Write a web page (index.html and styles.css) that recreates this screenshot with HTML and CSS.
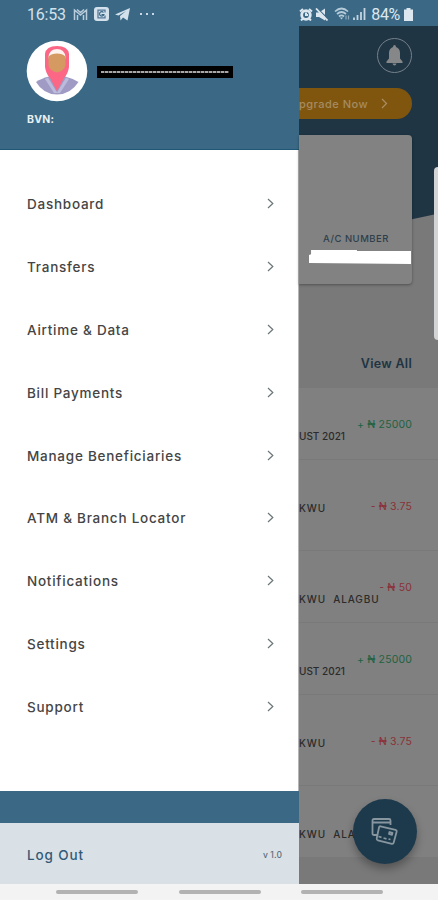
FILE: index.html
```html
<!DOCTYPE html>
<html lang="en">
<head>
    <meta charset="UTF-8">
    <meta name="viewport" content="width=device-width, initial-scale=1.0">
    <title>Mobile Banking</title>
    <link rel="stylesheet" href="styles.css">
</head>
<body>
    <div class="phone">
        <!-- Status Bar -->
        <div class="status-bar">
            <div class="status-left">
                <span class="time">16:53</span>
                <svg class="icon-mail" width="15" height="13" viewBox="0 0 15 13"><path d="M1.500 12V2l6 5 6-5v10M4.500 12V7M10.500 12V7M4 1.500l3.500 3 3.500-3" fill="none" stroke="#b9cddc" stroke-width="1.500"/></svg>
                <svg class="icon-app" width="15" height="14" viewBox="0 0 15 14"><rect width="15" height="14" rx="3" fill="#d3e1ec"/><path d="M11 5.500V3.200H4v7.600h7V8.500" fill="none" stroke="#55799a" stroke-width="1.300"/><path d="M9.500 5.500a2.200 2.200 0 1 0 .3 2.200H7.500" fill="none" stroke="#3b6985" stroke-width="1.200"/></svg>
                <svg class="icon-plane" width="15" height="13" viewBox="0 0 15 13"><path d="M0 6.500L15 0l-2.500 12.500-4.500-3-2.500 3-.5-4.500 6-5-7.500 4.500z" fill="#d3e1ec"/></svg>
                <span class="dots"><i></i><i></i><i></i></span>
            </div>
            <div class="status-right">
                <svg width="14" height="13" viewBox="0 0 14 13"><circle cx="7" cy="7" r="4.300" fill="none" stroke="#dce7ef" stroke-width="2.800"/><path d="M1 3.500l3-2.500M13 3.500L10 1M2 12.500l2-2M12 12.500l-2-2M7 4.500V7h2" stroke="#dce7ef" stroke-width="2" fill="none"/></svg>
                <svg class="icon-mute" width="13" height="13" viewBox="0 0 13 13"><path d="M1 4.500h3L10 .5v12L4 9H1z" fill="#dce7ef"/><path d="M2 0l11 11" stroke="#3b6985" stroke-width="1.300"/><path d="M1 .5l11.500 12" stroke="#dce7ef" stroke-width="1.800"/></svg>
                <svg class="icon-wifi" width="16" height="14" viewBox="0 0 16 14"><path d="M1 4.500q6.500-6 13 0M3 7q4.500-4 9 0M5 9.500q2.500-2.300 5 0" fill="none" stroke="#b4cbd9" stroke-width="1.700"/><path d="M7.500 12.500L5.800 10.500h3.400z" fill="#b4cbd9"/><path d="M12 8.500v4M14.500 8.500v4" stroke="#8aabc0" stroke-width="1.200"/></svg>
                <svg class="icon-signal" width="13" height="12" viewBox="0 0 13 12"><path d="M1 12V9.500M4.500 12V7M8 12V4M11.500 12V0" stroke="#c3d5e1" stroke-width="1.800"/></svg>
                <span class="battery-text">84%</span>
                <svg class="icon-battery" width="9" height="13" viewBox="0 0 9 13"><path d="M2.500 0h4v1.500H9V13H0V1.500h2.500z" fill="#dce7ef"/></svg>
            </div>
        </div>

        <div class="app">
            <!-- Side Drawer -->
            <aside class="drawer">
                <div class="profile">
                    <div class="profile-row">
                        <svg class="avatar" width="62" height="62" viewBox="0 0 62 62">
                            <circle cx="31" cy="31" r="30.300" fill="#fff"/>
                            <path d="M10 42q5-3.500 13-5.500h16q8 2 13.500 5.500-8 12.500-21.500 12.500T10 42z" fill="#9f9bc5"/>
                            <path d="M22 37.500l9 15 9-15 3 1.500-9 14h-6L19 39z" fill="#bcbbdb"/>
                            <path d="M19 14Q20 6 31 6t12 8v13q-1 7-5 11l-7 13-7-13q-4-4-5-11z" fill="#fb6784"/>
                            <path d="M22.500 17q1-8 8.500-8t8.500 8l-1 4h-15z" fill="#fff3f0"/>
                            <path d="M22.500 16.500q3-3 8.500-3t8.500 3v9q-1.500 5.500-8.500 7-7-1.500-8.500-7z" fill="#d49a62"/>
                        </svg>
                        <span class="name-mask"></span>
                    </div>
                    <div class="bvn">BVN:</div>
                </div>
                <nav class="menu">
                    <a class="menu-item"><span>Dashboard</span><svg class="chevron" width="7" height="11" viewBox="0 0 7 11"><path d="M1 1l4.800 4.500L1 10"/></svg></a>
                    <a class="menu-item"><span>Transfers</span><svg class="chevron" width="7" height="11" viewBox="0 0 7 11"><path d="M1 1l4.800 4.500L1 10"/></svg></a>
                    <a class="menu-item"><span>Airtime &amp; Data</span><svg class="chevron" width="7" height="11" viewBox="0 0 7 11"><path d="M1 1l4.800 4.500L1 10"/></svg></a>
                    <a class="menu-item"><span>Bill Payments</span><svg class="chevron" width="7" height="11" viewBox="0 0 7 11"><path d="M1 1l4.800 4.500L1 10"/></svg></a>
                    <a class="menu-item"><span>Manage Beneficiaries</span><svg class="chevron" width="7" height="11" viewBox="0 0 7 11"><path d="M1 1l4.800 4.500L1 10"/></svg></a>
                    <a class="menu-item"><span>ATM &amp; Branch Locator</span><svg class="chevron" width="7" height="11" viewBox="0 0 7 11"><path d="M1 1l4.800 4.500L1 10"/></svg></a>
                    <a class="menu-item"><span>Notifications</span><svg class="chevron" width="7" height="11" viewBox="0 0 7 11"><path d="M1 1l4.800 4.500L1 10"/></svg></a>
                    <a class="menu-item"><span>Settings</span><svg class="chevron" width="7" height="11" viewBox="0 0 7 11"><path d="M1 1l4.800 4.500L1 10"/></svg></a>
                    <a class="menu-item"><span>Support</span><svg class="chevron" width="7" height="11" viewBox="0 0 7 11"><path d="M1 1l4.800 4.500L1 10"/></svg></a>
                </nav>
                <div class="band"></div>
                <div class="logout">
                    <span>Log Out</span>
                    <span class="version">v 1.0</span>
                </div>
            </aside>

            <!-- Dimmed Dashboard -->
            <main class="dashboard">
                <div class="top">
                    <div class="bell">
                        <svg width="17" height="21" viewBox="0 0 17 21"><path d="M8.500 0q1.500 0 1.500 2 4 1.500 4 6v5.500l2.500 3V18H.5v-1.500l2.500-3V8q0-4.500 4-6 0-2 1.500-2zM6.500 18.500h4q-.5 2-2 2t-2-2z" fill="#858789"/></svg>
                    </div>
                    <div class="upgrade">
                        <span>pgrade Now</span>
                        <svg width="7" height="11" viewBox="0 0 7 11"><path d="M1 1l4.500 4.500L1 10" fill="none" stroke="#a98e63" stroke-width="1.200"/></svg>
                    </div>
                    <div class="card">
                        <div class="card-label">A/C NUMBER</div>
                        <div class="card-mask"></div>
                    </div>
                </div>
                <div class="view-all">View All</div>
                <div class="list">
                    <div class="row"><span class="desc">UST 2021</span><span class="amount credit">+ ₦ 25000</span></div>
                    <div class="row tall"><span class="desc name">KWU</span><span class="amount debit">- ₦ 3.75</span></div>
                    <div class="row"><span class="desc name">KWU&nbsp; ALAGBU</span><span class="amount debit">- ₦ 50</span></div>
                    <div class="row"><span class="desc">UST 2021</span><span class="amount credit">+ ₦ 25000</span></div>
                    <div class="row tall"><span class="desc name">KWU</span><span class="amount debit">- ₦ 3.75</span></div>
                    <div class="row"><span class="desc name">KWU&nbsp; ALA</span></div>
                </div>
                <div class="fab">
                    <svg width="28" height="29" viewBox="0 0 28 29" fill="none" stroke="#87969f" stroke-width="1.800" stroke-linejoin="round">
                        <path d="M6 18H3q-1.500 0-1.500-1.500v-13Q1.500 2 3 2h15q1.500 0 1.500 1.500V8M1.500 5.500h18"/>
                        <path d="M9.500 9.300l15 3.500q1.500.4 1.200 1.800l-3 11q-.4 1.500-1.800 1.200l-14-3.500q-1.500-.4-1.200-1.800L8 10.500q.3-1.500 1.500-1.200z"/>
                        <path d="M7.500 19.500l3 .8M12.500 21l3 .8M17.500 22l2 .5M18.500 15l3 .8-.5 2-3-.8z"/>
                    </svg>
                </div>
            </main>
        </div>

        <!-- System Navigation -->
        <div class="nav-bar"><i></i><i></i><i></i></div>
        <div class="edge-handle"></div>
    </div>
</body>
</html>
```
FILE: styles.css
```css
/* General Reset */
* {
    margin: 0;
    padding: 0;
    box-sizing: border-box;
}

body {
    font-family: Inter, "Open Sans", sans-serif;
    overflow: hidden;
}

svg {
    display: block;
    flex-shrink: 0;
}

.phone {
    position: relative;
    display: flex;
    flex-direction: column;
    width: 438px;
    height: 900px;
    overflow: hidden;
}

/* Status Bar */
.status-bar {
    display: flex;
    justify-content: space-between;
    height: 26px;
    padding: 2px 25px 0 27px;
    background-color: #3b6985;
    color: #dce7ef;
    font-family: Roboto, sans-serif;
    font-size: 16px;
}

.status-left, .status-right {
    display: flex;
    align-items: center;
}

.time {
    width: 46px;
    color: #d3e1ec;
    letter-spacing: -0.2px;
}

.icon-app, .icon-plane {
    margin-left: 6px;
}

.dots {
    display: flex;
    gap: 4px;
    margin-left: 10px;
}

.dots i {
    width: 2px;
    height: 2px;
    background-color: #c9d9e6;
}

.icon-mute {
    margin-left: 2px;
}

.icon-wifi {
    margin-left: 6px;
}

.icon-signal {
    margin-left: 3px;
}

.battery-text {
    margin-left: 5px;
    letter-spacing: -0.3px;
}

.icon-battery {
    margin-left: 4px;
}

.app {
    display: flex;
    height: 858px;
}

/* Side Drawer */
.drawer {
    display: flex;
    flex-direction: column;
    width: 299px;
    background: linear-gradient(90deg, #fff 298px, #b5b5b5 298px);
}

.profile {
    height: 124px;
    padding: 14px 0 0 26px;
    background-color: #3b6985;
    border-bottom: 1px solid #1f5877;
}

.profile-row {
    display: flex;
    align-items: center;
    gap: 9px;
}

.name-mask {
    width: 136px;
    height: 12px;
    margin-top: 2px;
    padding: 5px 4px;
    background: repeating-linear-gradient(90deg, #a8a8a8 0 3px, #444 3px 4px) content-box, #000;
}

.bvn {
    margin: 11px 0 0 1px;
    color: #e9f0f4;
    font-size: 10.5px;
    font-weight: 700;
    line-height: 14px;
    letter-spacing: 0.2px;
}

.menu {
    height: 641px;
    padding-top: 22px;
}

.menu-item {
    display: flex;
    align-items: center;
    justify-content: space-between;
    height: 62.9px;
    padding: 0 25px 0 27px;
    color: #454545;
    font-size: 13.5px;
    font-weight: 500;
    letter-spacing: 0.75px;
}

.menu-item span {
    padding-top: 1px;
}

.chevron path {
    fill: none;
    stroke: #6b7678;
    stroke-width: 1.2;
}

.band {
    height: 32px;
    background-color: #3b6985;
}

.logout {
    display: flex;
    align-items: center;
    justify-content: space-between;
    height: 61px;
    padding: 2px 17px 0 27px;
    background-color: #d9e1e7;
    color: #315a77;
    font-size: 13.5px;
    font-weight: 500;
    letter-spacing: 0.9px;
}

.version {
    color: #5c6d7a;
    font-size: 8.5px;
    letter-spacing: 0.1px;
}

/* Dimmed Dashboard */
.dashboard {
    position: relative;
    width: 139px;
    background-color: #797979;
}

.top {
    height: 258px;
    padding-top: 12px;
    background: linear-gradient(168deg, #1f3544 0 212px, #797979 213px);
}

.bell {
    display: flex;
    align-items: center;
    justify-content: center;
    width: 35px;
    height: 35px;
    margin-left: 78px;
    border: 1.5px solid #75818a;
    border-radius: 50%;
}

.upgrade {
    display: flex;
    align-items: center;
    justify-content: space-between;
    width: 113px;
    height: 31px;
    margin-top: 15px;
    padding-right: 24px;
    background-color: #80560f;
    border-radius: 0 16px 16px 0;
    color: #a58b60;
    font-size: 11px;
    font-weight: 500;
    letter-spacing: 0.5px;
}

.card {
    width: 113px;
    height: 149px;
    margin-top: 16px;
    padding-top: 97px;
    background-color: #828282;
    border-radius: 0 4px 4px 0;
    box-shadow: 0 1px 3px rgba(0, 0, 0, 0.35);
}

.card-label {
    margin-left: 24px;
    color: #2d3f4c;
    font-size: 9.5px;
    font-weight: 500;
    line-height: 13px;
    letter-spacing: 0.5px;
}

.card-mask {
    width: 102px;
    height: 14px;
    margin: 5px 0 0 10px;
    background-color: #fff;
    clip-path: polygon(2% 0, 47% 0, 47% 8%, 100% 8%, 100% 100%, 0 93%, 0 35%, 2% 30%);
}

.view-all {
    height: 104px;
    padding: 71px 26px 0 0;
    color: #1e3443;
    font-size: 12.5px;
    font-weight: 600;
    line-height: 18px;
    letter-spacing: 0.3px;
    text-align: right;
}

.list {
    background-color: #808080;
}

.row {
    display: flex;
    justify-content: space-between;
    height: 72px;
    padding-right: 26px;
    border-bottom: 1px solid #797979;
    font-size: 10px;
    line-height: 14px;
    white-space: nowrap;
}

.row.tall {
    height: 91px;
}

.desc {
    margin-top: 41px;
    color: #2b2b2b;
    font-weight: 500;
}

.name {
    width: 0;
    letter-spacing: 0.9px;
}

.amount {
    margin-top: 30px;
    font-size: 10.5px;
    letter-spacing: 0.15px;
}

.tall .amount {
    margin-top: 40px;
}

.credit {
    color: #1e6240;
}

.debit {
    color: #8b3038;
}

.fab {
    position: absolute;
    left: 54px;
    top: 773px;
    display: flex;
    align-items: center;
    justify-content: center;
    width: 64px;
    height: 65px;
    background-color: #1d3a4c;
    border-radius: 50%;
    box-shadow: 0 5px 8px rgba(0, 0, 0, 0.3);
}

/* System Navigation */
.nav-bar {
    display: flex;
    gap: 40.5px;
    height: 16px;
    padding: 6px 0 0 56px;
    background-color: #f3f3f3;
}

.nav-bar i {
    width: 82px;
    height: 4px;
    background-color: #b2b2b2;
    border-radius: 2px;
}

.edge-handle {
    position: absolute;
    top: 167px;
    right: 0;
    width: 4px;
    height: 173px;
    background-color: #d2d4d5;
    border-radius: 4px 0 0 4px;
}
```
